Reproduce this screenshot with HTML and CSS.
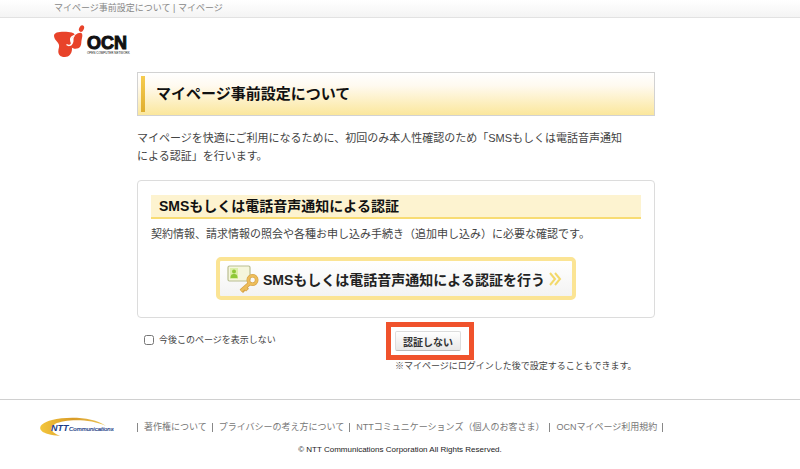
FILE: index.html
```html
<!DOCTYPE html>
<html lang="ja">
<head>
<meta charset="utf-8">
<meta name="viewport" content="width=device-width, initial-scale=1">
<title>マイページ事前設定について | マイページ</title>
<link rel="stylesheet" href="styles.css">
</head>
<body>
<div class="topbar">マイページ事前設定について | マイページ</div>
<header class="site-header">
  <a class="logo" href="#" aria-label="OCN">
    <svg width="80" height="34" viewBox="0 0 80 34">
      <g fill="#e8432a">
        <path d="M0 11C0 7.500 4 6.700 10 6.700C16 6.700 21 7.500 20.500 10C20 12 17 12.500 16.500 14.500C16 17 18 19 18 23.500C18 29 15 32 11 32C7 32.300 4.300 30 4.300 26.500C4.300 23.500 5.500 22 5 20C4.500 17 0.500 15.500 0 11Z"/>
        <path d="M19.500 15.500C19.200 10.500 23 8 26.500 7.800C29 8 28.500 11.500 27.800 14C27 17 27.800 19 26.300 21.500C24.500 24.300 19.500 24.500 17 22C16 20.600 19.800 19 19.500 15.500Z"/>
        <ellipse cx="27.500" cy="3.600" rx="2.300" ry="3.400" transform="rotate(28 27.500 3.600)"/>
      </g>
      <path d="M20.500 10.500C13.500 13 18.500 16 17.500 19C16.500 20.500 14.500 21 12.500 19.500" fill="none" stroke="#fff" stroke-width="1.500"/>
      <text class="logo-name" x="33" y="24">OCN</text>
      <text class="logo-tag" x="33" y="29">OPEN COMPUTER NETWORK</text>
    </svg>
  </a>
</header>
<main class="content">
  <h1 class="page-title"><span class="title-mark"></span>マイページ事前設定について</h1>
  <p class="lead">マイページを快適にご利用になるために、初回のみ本人性確認のため「SMSもしくは電話音声通知<br>による認証」を行います。</p>
  <section class="panel">
    <h2 class="panel-title">SMSもしくは電話音声通知による認証</h2>
    <p class="panel-text">契約情報、請求情報の照会や各種お申し込み手続き（追加申し込み）に必要な確認です。</p>
    <button class="auth-button" type="button">
      <svg width="32" height="28" viewBox="0 0 32 28">
        <rect x="1" y="1" width="22" height="15" rx="1.500" fill="#f5f6dc" stroke="#b9bd91" stroke-width="1.200"/>
        <rect x="3" y="3" width="8" height="11" fill="#dcefa8"/>
        <circle cx="7" cy="6.500" r="2" fill="#8fc838"/>
        <path d="M3.500 13C3.500 9.500 5 9 7 9S10.500 9.500 10.500 13Z" fill="#8fc838"/>
        <path d="M22.500 18.500L14 26M18 22.500L20.500 25.200M15.500 24.500L17.500 26.500" stroke="#d3a047" stroke-width="4" fill="none"/>
        <circle cx="25.500" cy="15" r="4.200" fill="none" stroke="#d3a047" stroke-width="3.600"/>
        <path d="M22.500 18.500L14 26M18 22.500L20 24.800" stroke="#edbd5a" stroke-width="2.600" fill="none"/>
        <circle cx="25.500" cy="15" r="4.200" fill="none" stroke="#edbd5a" stroke-width="2.400"/>
      </svg>
      <span>SMSもしくは電話音声通知による認証を行う</span>
      <svg width="13" height="14" viewBox="0 0 13 14"><path d="M1 1L6 7L1 13M6 1L11 7L6 13" fill="none" stroke="#f3d96b" stroke-width="2"/></svg>
    </button>
  </section>
  <div class="options">
    <label class="hide-option"><input type="checkbox">今後このページを表示しない</label>
    <div class="skip">
      <button class="skip-button" type="button">認証しない</button>
      <p class="skip-note">※マイページにログインした後で設定することもできます。</p>
    </div>
  </div>
</main>
<footer class="site-footer">
  <div class="footer-row">
    <svg width="74" height="20" viewBox="0 0 74 20">
      <defs><linearGradient id="swoosh" x1="0" y1="0" x2="1" y2="0"><stop offset="0" stop-color="#f3c63c"/><stop offset=".5" stop-color="#d99b27"/><stop offset="1" stop-color="#edc85a"/></linearGradient></defs>
      <path d="M66 9C54 0 28-1 12 3C-3 7-3 14 8 17C12 18.300 16 18.800 20 18.700C11 15.500 9 11 15 7C25 2 50 1.500 66 9Z" fill="url(#swoosh)"/>
      <text class="ntt-name" x="11" y="14">NTT</text>
      <text class="ntt-sub" x="29" y="14">Communications</text>
    </svg>
    <ul class="footer-links">
      <li><a href="#">著作権について</a></li>
      <li><a href="#">プライバシーの考え方について</a></li>
      <li><a href="#">NTTコミュニケーションズ（個人のお客さま）</a></li>
      <li><a href="#">OCNマイページ利用規約</a></li>
    </ul>
  </div>
  <p class="copyright">© NTT Communications Corporation All Rights Reserved.</p>
</footer>
</body>
</html>
```
FILE: styles.css
```css
*,
*::before {
  box-sizing: border-box;
}

body {
  margin: 0;
  background: #fff;
  color: #444;
  font-family: "Liberation Sans", "Noto Sans CJK JP", sans-serif;
  font-size: 11px;
  line-height: 18px;
}

h1, h2, p, ul {
  margin: 0;
  padding: 0;
}

button {
  font-family: inherit;
  cursor: pointer;
}

svg {
  display: block;
  flex: none;
}

.topbar {
  padding: 0 54px;
  border-bottom: 1px solid #e2e2e2;
  background: linear-gradient(#fff, #f4f4f4);
  color: #888;
  font-size: 9px;
  line-height: 17px;
}

.site-header {
  display: flex;
  padding: 7px 54px 0;
}

.logo-name {
  fill: #111;
  stroke: #111;
  stroke-width: 1px;
  font-size: 18px;
  font-weight: bold;
  line-height: 18px;
}

.logo-tag {
  fill: #111;
  font-size: 3px;
}

.content {
  max-width: 526px;
  margin: 0 auto;
  padding: 13px 8px 0 0;
}

.page-title {
  display: flex;
  align-items: center;
  gap: 11px;
  padding: 3px;
  border: 1px solid #d2d2d2;
  background: linear-gradient(#fff, #fffaf0 30%, #fbe79c);
  color: #111;
  font-size: 15px;
  line-height: 36px;
}

.title-mark {
  width: 4px;
  align-self: stretch;
  background: linear-gradient(#f6cc50, #dfae30);
}

.lead {
  padding: 13px 0 15px;
}

.panel {
  padding: 14px 13px 17px;
  border: 1px solid #dcdcdc;
  border-radius: 4px;
}

.panel-title {
  padding: 0 8px;
  border-bottom: 2px solid #f8dc74;
  background: #fdf3d0;
  color: #111;
  font-size: 14px;
  line-height: 22px;
}

.panel-text {
  padding: 6px 0 14px;
}

.auth-button {
  display: flex;
  align-items: center;
  gap: 4px;
  width: 360px;
  max-width: 100%;
  height: 43px;
  margin: 0 auto;
  padding: 0 7px;
  border: 4px solid #fbe494;
  border-radius: 5px;
  background: linear-gradient(#fff, #f3f3f3);
  color: #222;
  font-size: 14px;
  font-weight: bold;
  white-space: nowrap;
}

.options {
  display: flex;
  justify-content: space-between;
  padding: 13px 10px 0 7px;
  font-size: 9px;
}

.hide-option {
  display: flex;
  align-items: center;
  align-self: flex-start;
  gap: 5px;
}

.hide-option input {
  width: 10px;
  height: 10px;
  margin: 0;
}

.skip {
  position: relative;
  width: 250px;
}

.skip::before {
  content: "";
  position: absolute;
  top: -9px;
  left: -9px;
  width: 88px;
  height: 38px;
  border: 5px solid #f0522c;
  pointer-events: none;
}

.skip-button {
  display: block;
  width: 66px;
  height: 20px;
  padding: 0;
  border: 1px solid #ddd;
  border-bottom-color: #bbb;
  border-radius: 2px;
  background: linear-gradient(#fff, #e8e8e8);
  color: #333;
  font-size: 10px;
  font-weight: bold;
}

.skip-note {
  padding-top: 6px;
  white-space: nowrap;
}

.site-footer {
  margin-top: 24px;
  border-top: 1px solid #d0d0d0;
  font-size: 9px;
}

.footer-row {
  display: flex;
  align-items: center;
  gap: 23px;
  padding: 17px 40px 0;
}

.ntt-name {
  fill: #1d3c86;
  font-size: 9px;
  font-style: italic;
  font-weight: bold;
}

.ntt-sub {
  fill: #1d3c86;
  stroke: #1d3c86;
  stroke-width: 0.2px;
  font-size: 6px;
  font-style: italic;
}

.footer-links {
  display: flex;
  list-style: none;
  line-height: 9px;
}

.footer-links li {
  padding: 0 5px 0 6px;
  border-left: 1px solid #888;
}

.footer-links li:last-child {
  border-right: 1px solid #888;
}

.footer-links a {
  color: #777;
  text-decoration: none;
}

.copyright {
  padding: 4px 0 11px;
  color: #222;
  font-size: 8px;
  text-align: center;
}
```
